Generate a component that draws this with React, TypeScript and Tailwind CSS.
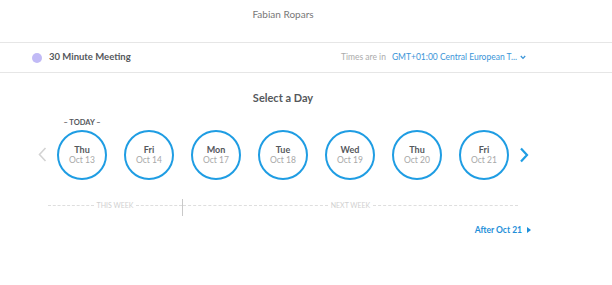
const days = [
  { day: "Thu", date: "Oct 13", today: true },
  { day: "Fri", date: "Oct 14" },
  { day: "Mon", date: "Oct 17" },
  { day: "Tue", date: "Oct 18" },
  { day: "Wed", date: "Oct 19" },
  { day: "Thu", date: "Oct 20" },
  { day: "Fri", date: "Oct 21" },
];

const WeekLabel = ({ label }: { label: string }) => (
  <div className="flex flex-1 items-center h-[12px]">
    <div className="flex-1 border-t border-dashed border-[#dedede]" />
    <span className="px-[3px] text-[7px] leading-[12px] uppercase text-[#d0d0d0]">{label}</span>
    <div className="flex-1 border-t border-dashed border-[#dedede]" />
  </div>
);

export default function App() {
  return (
    <div className="w-[612px] h-[285px] bg-white font-['Lato',sans-serif] overflow-hidden">
      <div className="w-[566px] h-[42px] pt-[8px] text-center text-[10px] leading-[12px] text-[#777]">
        Fabian Ropars
      </div>

      <div className="h-[31px] border-y border-[#e6e6e6] flex items-center">
        <div className="w-[10px] h-[10px] rounded-full bg-[#c1baf6] ml-[32px]" />
        <span className="ml-[7px] text-[9.5px] font-bold text-[#55585c]">30 Minute Meeting</span>
        <div className="ml-auto mr-[86px] flex items-center text-[8.5px]">
          <span className="text-[#ababab]">Times are in</span>
          <span className="ml-[6px] text-[#3b95d8]">GMT+01:00 Central European T...</span>
          <svg width="6" height="5" viewBox="0 0 6 5" className="ml-[3px]">
            <path d="M0.8 1 L3 3.4 L5.2 1" fill="none" stroke="#3b95d8" strokeWidth="1.3" />
          </svg>
        </div>
      </div>

      <div className="w-[566px] mt-[17px] h-[16px] leading-[16px] text-center text-[11px] font-bold text-[#55585c]">
        Select a Day
      </div>

      <div className="mt-[12px] flex items-end pl-[38px]">
        <svg width="9" height="15" viewBox="0 0 9 15" className="mb-[18px]">
          <path d="M7.5 1 L1.5 7.5 L7.5 14" fill="none" stroke="#d3d3d3" strokeWidth="1.6" />
        </svg>
        <div className="ml-[10px] flex gap-[17px]">
          {days.map((d, i) => (
            <div key={i} className="flex flex-col items-center">
              <div className="h-[12px] text-[7.5px] leading-[10px] font-bold text-[#55585c] whitespace-nowrap">
                {d.today ? "– TODAY –" : ""}
              </div>
              <div className="w-[50px] h-[50px] rounded-full border-[2.5px] border-[#1f9de3] flex flex-col items-center justify-center">
                <span className="text-[9px] leading-[11px] font-bold text-[#55585c]">{d.day}</span>
                <span className="text-[8.5px] leading-[11px] text-[#a8a8a8]">{d.date}</span>
              </div>
            </div>
          ))}
        </div>
        <svg width="10" height="16" viewBox="0 0 10 16" className="ml-[10px] mb-[17px]">
          <path d="M2 1.5 L8 8 L2 14.5" fill="none" stroke="#1f9de3" strokeWidth="2.2" />
        </svg>
      </div>

      <div className="mt-[19px] ml-[48px] w-[470px] flex items-start">
        <WeekLabel label="This Week" />
        <div className="w-px h-[17px] bg-[#c9c9c9] shrink-0" />
        <div className="flex w-[335px]">
          <WeekLabel label="Next Week" />
        </div>
      </div>

      <div className="mt-[8px] flex justify-end items-center pr-[81px] h-[12px]">
        <span className="text-[8.5px] font-bold text-[#1f8fd9]">After Oct 21</span>
        <svg width="4" height="6" viewBox="0 0 4 6" className="ml-[5px]">
          <path d="M0 0 L4 3 L0 6 Z" fill="#1f8fd9" />
        </svg>
      </div>
    </div>
  );
}
